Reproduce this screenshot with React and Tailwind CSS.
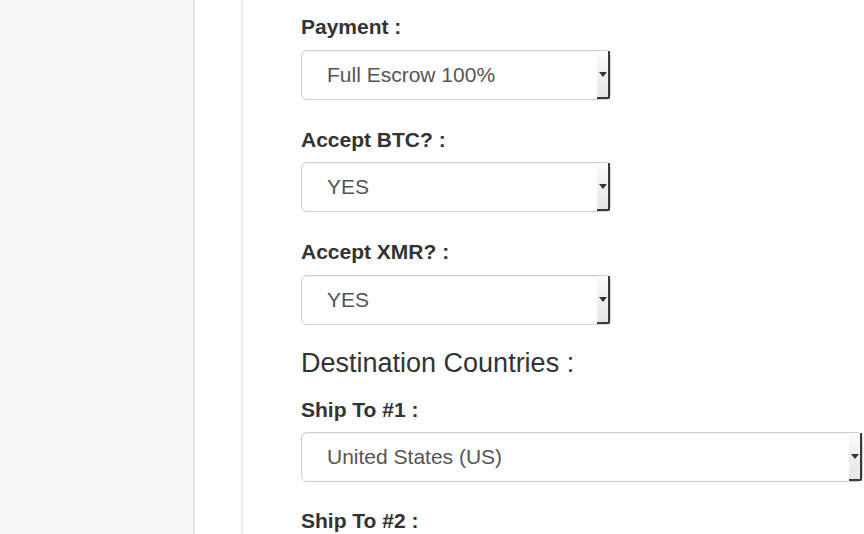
import React from 'react';

function FakeSelect({ value, width }) {
  return (
    <div className={`flex h-[50px] ${width} rounded-[6px] border border-[#cfcfcf] bg-white shadow-[inset_0_1px_1px_rgba(0,0,0,0.06)]`}>
      <div className="flex flex-1 items-center pl-[25px] text-[21px] text-[#555]">{value}</div>
      <div className="flex w-[13px] shrink-0 flex-col items-center justify-center border-r-2 border-b-2 border-r-[#3a3a3a] border-b-[#3a3a3a] bg-gradient-to-b from-[#fbfbfb] to-[#e6e6e6] rounded-br-[2px]">
        <div className="h-0 w-0 border-l-[4px] border-r-[4px] border-t-[5px] border-l-transparent border-r-transparent border-t-[#333]" />
      </div>
    </div>
  );
}

function Label({ children, className = '' }) {
  return (
    <div className={`text-[21px] font-bold leading-[30px] text-[#333] ${className}`}>{children}</div>
  );
}

export default function App() {
  return (
    <div className="flex h-[534px] w-[864px] overflow-hidden bg-white font-['Liberation_Sans',Arial,sans-serif]">
      {/* sidebar */}
      <div className="w-[195px] shrink-0 border-r-2 border-[#e4e4e4] bg-[#f6f6f6]" />
      <div className="w-[48px] shrink-0 border-r-2 border-[#ececec] bg-white" />

      {/* form */}
      <div className="min-w-0 flex-1 pl-[58px] pt-[12px]">
        <Label className="mb-[8px]">Payment :</Label>
        <FakeSelect value="Full Escrow 100%" width="w-[310px]" />

        <Label className="mt-[25px] mb-[7px]">Accept BTC? :</Label>
        <FakeSelect value="YES" width="w-[310px]" />

        <Label className="mt-[25px] mb-[8px]">Accept XMR? :</Label>
        <FakeSelect value="YES" width="w-[310px]" />

        <h3 className="mt-[19px] mb-[13px] text-[27px] leading-[38px] font-normal text-[#333]">Destination Countries :</h3>

        <Label className="mb-[7px]">Ship To #1 :</Label>
        <FakeSelect value="United States (US)" width="w-[562px]" />

        <Label className="mt-[24px]">Ship To #2 :</Label>
      </div>
    </div>
  );
}
